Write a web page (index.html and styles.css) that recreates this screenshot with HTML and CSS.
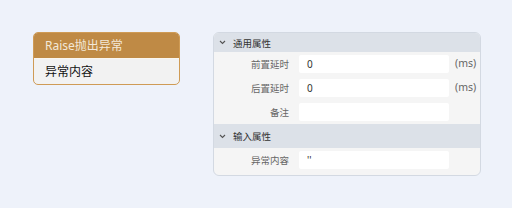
FILE: index.html
```html
<!DOCTYPE html>
<html lang="zh-CN">

<head>
    <meta charset="UTF-8">
    <title>Raise抛出异常</title>
    <link rel="stylesheet" href="styles.css">
</head>

<body>
    <!-- flow node -->
    <div class="node">
        <div class="node-title">Raise抛出异常</div>
        <div class="node-body">异常内容</div>
    </div>

    <!-- property panel -->
    <div class="panel">
        <div class="section-head first">
            <svg class="chevron" width="7" height="5" viewBox="0 0 7 5"><path d="M1 1l2.5 2.5L6 1" fill="none" stroke="#555" stroke-width="1.1"/></svg>
            通用属性
        </div>
        <div class="row">
            <div class="label">前置延时</div>
            <div class="field">0</div>
            <div class="unit">(ms)</div>
        </div>
        <div class="row">
            <div class="label">后置延时</div>
            <div class="field">0</div>
            <div class="unit">(ms)</div>
        </div>
        <div class="row">
            <div class="label">备注</div>
            <div class="field"></div>
        </div>
        <div class="section-head">
            <svg class="chevron" width="7" height="5" viewBox="0 0 7 5"><path d="M1 1l2.5 2.5L6 1" fill="none" stroke="#555" stroke-width="1.1"/></svg>
            输入属性
        </div>
        <div class="row">
            <div class="label">异常内容</div>
            <div class="field">''</div>
        </div>
    </div>
</body>

</html>
```

FILE: styles.css
```css
* {
    margin: 0;
    padding: 0;
    box-sizing: border-box;
    font-family: "Noto Sans", "Noto Sans CJK SC", sans-serif;
}

body {
    background-color: #eef2fa;
    display: flex;
    align-items: flex-start;
    gap: 33px;
    padding: 32px 0 0 33px;
}

.node {
    width: 147px;
    border: 1px solid #cf9b55;
    border-radius: 5px;
    overflow: hidden;
    background-color: #f2f2f2;
}

.node-title {
    height: 25px;
    line-height: 25px;
    padding-left: 11px;
    background-color: #bf8a45;
    color: #f3e8d8;
    font-size: 12px;
}

.node-body {
    height: 26px;
    line-height: 26px;
    padding-left: 11px;
    border-top: 1px solid #faf6ef;
    color: #111;
    font-size: 12px;
}

.panel {
    width: 268px;
    border: 1px solid #d3d9e2;
    border-radius: 6px;
    overflow: hidden;
    background-color: #f5f5f5;
    padding-bottom: 3px;
}

.section-head {
    height: 24px;
    display: flex;
    align-items: center;
    gap: 7px;
    padding-left: 5px;
    background-color: #dce1e8;
    color: #333;
    font-size: 9.5px;
}

.section-head.first {
    height: 19px;
}

.chevron {
    flex-shrink: 0;
}

.row {
    display: grid;
    grid-template-columns: 75px 150px auto;
    column-gap: 10px;
    align-items: center;
    padding: 3px 0;
}

.label {
    text-align: right;
    color: #666;
    font-size: 9.5px;
}

.field {
    height: 18px;
    line-height: 18px;
    background-color: #fff;
    border-radius: 2px;
    padding-left: 8px;
    color: #333;
    font-size: 10px;
}

.unit {
    margin-left: -4px;
    color: #666;
    font-size: 10.5px;
    margin-top: -2px;
}
```
